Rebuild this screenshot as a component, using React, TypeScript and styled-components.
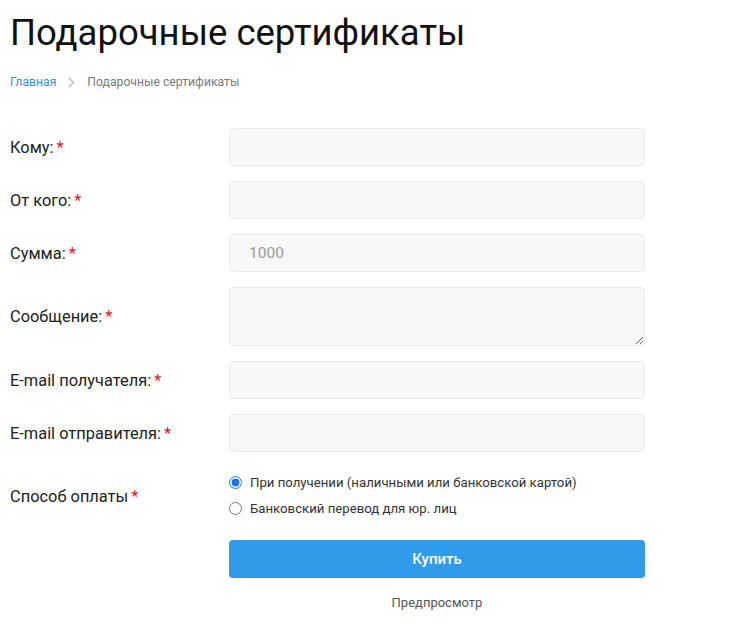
import React from 'react';
import styled, { createGlobalStyle } from 'styled-components';

const GlobalStyle = createGlobalStyle`
    body {
        margin: 0;
        background: #fff;
        font-family: Roboto, "Liberation Sans", Arial, sans-serif;
        color: #111;
    }
`;

const Page = styled.div`
    padding: 11px 10px 20px;
`;

const Title = styled.h1`
    margin: 0;
    font-size: 36.5px;
    font-weight: 400;
    line-height: 44px;
    color: #111;
`;

const Breadcrumbs = styled.nav`
    display: flex;
    align-items: center;
    gap: 12px;
    margin-top: 19px;
    font-size: 12.2px;
    line-height: 16px;
`;

const Crumb = styled.a<{ $active?: boolean }>`
    color: ${p => (p.$active ? '#7a7a7a' : '#3c8fd6')};
    text-decoration: none;
`;

const Form = styled.form`
    display: grid;
    grid-template-columns: 219px 416px;
    row-gap: 15px;
    align-items: center;
    margin-top: 38px;
`;

const Label = styled.label`
    font-size: 16.4px;
    color: #222;
`;

const Req = styled.span`
    color: #e3111d;
    margin-left: 3px;
`;

const Input = styled.input`
    box-sizing: border-box;
    width: 100%;
    height: 38px;
    padding: 0 19px;
    background: #f8f8f8;
    border: 1px solid #ececec;
    border-radius: 4px;
    font-family: inherit;
    font-size: 15.5px;
    color: #333;
    outline: none;
    &::placeholder {
        color: #9a9a9a;
    }
`;

const TextArea = styled.textarea`
    box-sizing: border-box;
    width: 100%;
    height: 59px;
    display: block;
    padding: 10px 19px;
    background: #f8f8f8;
    border: 1px solid #ececec;
    border-radius: 4px;
    font-family: inherit;
    font-size: 15px;
    outline: none;
`;

const RadioGroup = styled.div`
    display: flex;
    flex-direction: column;
    padding: 2px 0 4px;
`;

const RadioLine = styled.label`
    display: flex;
    align-items: center;
    height: 26px;
    font-size: 13.2px;
    color: #333;
    cursor: pointer;
`;

const Radio = styled.input`
    margin: 0 8px 0 0;
    width: 13px;
    height: 13px;
    accent-color: #1a73e8;
`;

const Actions = styled.div`
    grid-column: 2;
    display: flex;
    flex-direction: column;
    align-items: center;
`;

const BuyButton = styled.button`
    width: 100%;
    height: 38px;
    border: none;
    border-radius: 4px;
    background: #2f9bea;
    color: #fff;
    font-family: inherit;
    font-size: 15px;
    font-weight: 500;
    cursor: pointer;
`;

const Preview = styled.a`
    margin-top: 17px;
    font-size: 13px;
    color: #555;
    text-decoration: none;
`;

const Chevron = () => (
    <svg width="7" height="11" viewBox="0 0 7 11" fill="none">
        <path d="M1 1l4.5 4.5L1 10" stroke="#b5b5b5" strokeWidth="1.2" />
    </svg>
);

const fields = [
    { label: 'Кому:', name: 'to' },
    { label: 'От кого:', name: 'from' },
    { label: 'Сумма:', name: 'sum', placeholder: '1000' },
];

const emails = [
    { label: 'E-mail получателя:', name: 'email_to' },
    { label: 'E-mail отправителя:', name: 'email_from' },
];

const App: React.FC = () => {
    return (
        <Page>
            <GlobalStyle />
            <Title>Подарочные сертификаты</Title>
            <Breadcrumbs>
                <Crumb href="#">Главная</Crumb>
                <Chevron />
                <Crumb $active>Подарочные сертификаты</Crumb>
            </Breadcrumbs>
            <Form onSubmit={e => e.preventDefault()}>
                {fields.map(f => (
                    <React.Fragment key={f.name}>
                        <Label htmlFor={f.name}>{f.label}<Req>*</Req></Label>
                        <Input id={f.name} placeholder={f.placeholder} />
                    </React.Fragment>
                ))}
                <Label htmlFor="msg">Сообщение:<Req>*</Req></Label>
                <TextArea id="msg" />
                {emails.map(f => (
                    <React.Fragment key={f.name}>
                        <Label htmlFor={f.name}>{f.label}<Req>*</Req></Label>
                        <Input id={f.name} type="email" />
                    </React.Fragment>
                ))}
                <Label>Способ оплаты<Req>*</Req></Label>
                <RadioGroup>
                    <RadioLine>
                        <Radio type="radio" name="pay" defaultChecked />
                        При получении (наличными или банковской картой)
                    </RadioLine>
                    <RadioLine>
                        <Radio type="radio" name="pay" />
                        Банковский перевод для юр. лиц
                    </RadioLine>
                </RadioGroup>
                <Actions>
                    <BuyButton type="submit">Купить</BuyButton>
                    <Preview href="#">Предпросмотр</Preview>
                </Actions>
            </Form>
        </Page>
    );
};

export default App;
